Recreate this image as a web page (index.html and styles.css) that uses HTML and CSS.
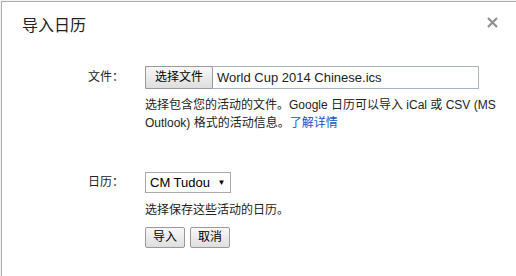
FILE: index.html
```html
<!DOCTYPE html>
<html lang="zh-CN">
<head>
    <meta charset="UTF-8">
    <title>导入日历</title>
    <link rel="stylesheet" href="styles.css">
</head>
<body>
    <div class="dialog">
        <div class="dialog-head">
            <h2 class="dialog-title">导入日历</h2>
            <svg class="close" width="11" height="11" viewBox="0 0 11 11">
                <path d="M1 1 L10 10 M10 1 L1 10" stroke="#8f8f8f" stroke-width="2.2"/>
            </svg>
        </div>

        <div class="form">
            <div class="row">
                <div class="label">文件：</div>
                <div class="field">
                    <div class="file-input">
                        <span class="btn file-btn">选择文件</span>
                        <span class="file-name">World Cup 2014 Chinese.ics</span>
                    </div>
                    <p class="hint">选择包含您的活动的文件。Google 日历可以导入 iCal 或 CSV (MS Outlook) 格式的活动信息。<a href="#">了解详情</a></p>
                </div>
            </div>

            <div class="row row-cal">
                <div class="label">日历：</div>
                <div class="field">
                    <div class="select">CM Tudou <span class="arrow">&#9660;</span></div>
                    <p class="hint">选择保存这些活动的日历。</p>
                    <div class="actions">
                        <span class="btn">导入</span>
                        <span class="btn">取消</span>
                    </div>
                </div>
            </div>
        </div>
    </div>
</body>
</html>
```

FILE: styles.css
```css
* {
    margin: 0;
    padding: 0;
    box-sizing: border-box;
}

body {
    font-family: "Liberation Sans", Arial, "Noto Sans CJK SC", sans-serif;
    font-size: 13px;
    color: #222;
    background: #f4f4f4;
    height: 276px;
    overflow: hidden;
}

.dialog {
    margin: 1px 0 0 1px;
    height: 275px;
    background: #fff;
    border-top: 1px solid #acacac;
    border-left: 1px solid #acacac;
    padding: 13px 18px 0 20px;
}

.dialog-head {
    display: flex;
    justify-content: space-between;
    align-items: flex-start;
}

.dialog-title {
    font-size: 16px;
    font-weight: normal;
    line-height: 22px;
    color: #222;
}

.close {
    margin-top: 2px;
}

.form {
    margin: 29px 0 0 66px;
}

.row {
    display: flex;
}

.row-cal {
    margin-top: 39px;
}

.label {
    flex: none;
    width: 57px;
    padding-top: 3px;
    font-size: 12px;
    line-height: 16px;
}

.field {
    flex: 1;
}

.file-input {
    display: flex;
    align-items: center;
    width: 334px;
    height: 23px;
    border: 1px solid #a9b4c2;
}

.btn {
    display: inline-block;
    height: 21px;
    line-height: 19px;
    padding: 0 7px;
    font-size: 12px;
    border: 1px solid #9a9a9a;
    border-radius: 2px;
    background: linear-gradient(#f8f8f8, #dedede);
    color: #000;
}

.file-btn {
    margin-left: -1px;
    height: 23px;
    line-height: 21px;
    padding: 0 9px;
}

.file-name {
    padding-left: 4px;
    color: #222;
}

.hint {
    margin-top: 7px;
    font-size: 12px;
    line-height: 18px;
    width: 356px;
}

.hint a {
    color: #15c;
    text-decoration: none;
}

.select {
    display: inline-block;
    height: 21px;
    line-height: 19px;
    padding: 0 4px;
    border: 1px solid #aaa;
    color: #000;
    margin-top: 1px;
}

.arrow {
    font-size: 8px;
    margin-left: 4px;
    vertical-align: 2px;
}

.row-cal .hint {
    margin-top: 8px;
}

.actions {
    display: flex;
    gap: 5px;
    margin-top: 8px;
}
```
